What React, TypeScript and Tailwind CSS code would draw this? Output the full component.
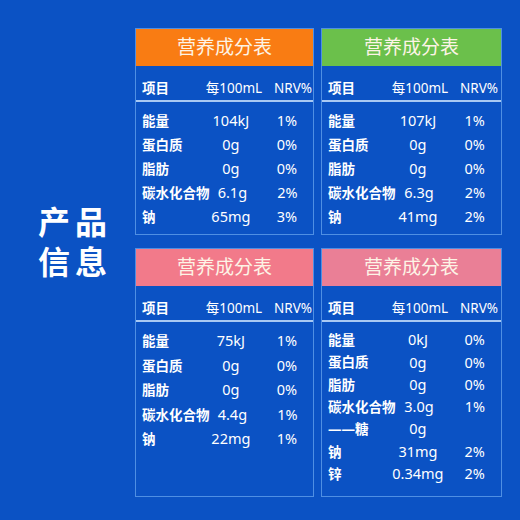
type Row = [string, string, string];

const font = {
  fontFamily: '"Noto Sans", "Noto Sans CJK SC", sans-serif',
};

const Panel = ({
  head,
  rows,
  className,
  rowClass,
}: {
  head: string;
  rows: Row[];
  className: string;
  rowClass: string;
}) => {
  return (
    <div className={`flex flex-col border border-[#4f8fe3] ${className}`}>
      <div className={`h-[37px] flex items-center justify-center text-[19px] text-[#fdf4e6] ${head}`}>
        营养成分表
      </div>
      <div className="h-[36px] flex items-center pt-[10px] text-[13.5px] text-white border-b-2 border-[#a9c9f3]">
        <span className="w-[67px] pl-[6px] font-bold">项目</span>
        <span className="w-[62px] text-center whitespace-nowrap">每100mL</span>
        <span className="w-[47px] text-right">NRV%</span>
      </div>
      <div className="flex flex-col pt-[7px]">
        {rows.map(([name, val, nrv]) => (
          <div key={name} className={`flex items-center text-white ${rowClass}`}>
            <span className="w-[67px] pl-[6px] text-[13.5px] font-bold whitespace-nowrap">
              {name}
            </span>
            <span className="w-[62px] text-center text-[14.5px]">{val}</span>
            <span className="w-[54px] text-center text-[14.5px]">{nrv}</span>
          </div>
        ))}
      </div>
    </div>
  );
};

export default function App() {
  return (
    <div
      className="w-[520px] h-[520px] bg-[#0b52c4] flex items-start pt-[28px] pl-[38px]"
      style={font}
    >
      <div className="w-[97px] flex flex-col pt-[174px] text-white text-[32px] font-bold leading-[40px] tracking-[5px]">
        <span>产品</span>
        <span>信息</span>
      </div>
      <div className="grid grid-cols-[179px_181px] content-start gap-x-[7px] gap-y-[13px]">
        <Panel
          head="bg-[#f97c13]"
          className="h-[207px]"
          rowClass="h-[24px]"
          rows={[
            ["能量", "104kJ", "1%"],
            ["蛋白质", "0g", "0%"],
            ["脂肪", "0g", "0%"],
            ["碳水化合物", "6.1g", "2%"],
            ["钠", "65mg", "3%"],
          ]}
        />
        <Panel
          head="bg-[#6bc04b]"
          className="h-[207px]"
          rowClass="h-[24px]"
          rows={[
            ["能量", "107kJ", "1%"],
            ["蛋白质", "0g", "0%"],
            ["脂肪", "0g", "0%"],
            ["碳水化合物", "6.3g", "2%"],
            ["钠", "41mg", "2%"],
          ]}
        />
        <Panel
          head="bg-[#f27a8a]"
          className="h-[249px]"
          rowClass="h-[24.5px]"
          rows={[
            ["能量", "75kJ", "1%"],
            ["蛋白质", "0g", "0%"],
            ["脂肪", "0g", "0%"],
            ["碳水化合物", "4.4g", "1%"],
            ["钠", "22mg", "1%"],
          ]}
        />
        <Panel
          head="bg-[#ea7f96]"
          className="h-[249px]"
          rowClass="h-[22.3px]"
          rows={[
            ["能量", "0kJ", "0%"],
            ["蛋白质", "0g", "0%"],
            ["脂肪", "0g", "0%"],
            ["碳水化合物", "3.0g", "1%"],
            ["——糖", "0g", ""],
            ["钠", "31mg", "2%"],
            ["锌", "0.34mg", "2%"],
          ]}
        />
      </div>
    </div>
  );
}
